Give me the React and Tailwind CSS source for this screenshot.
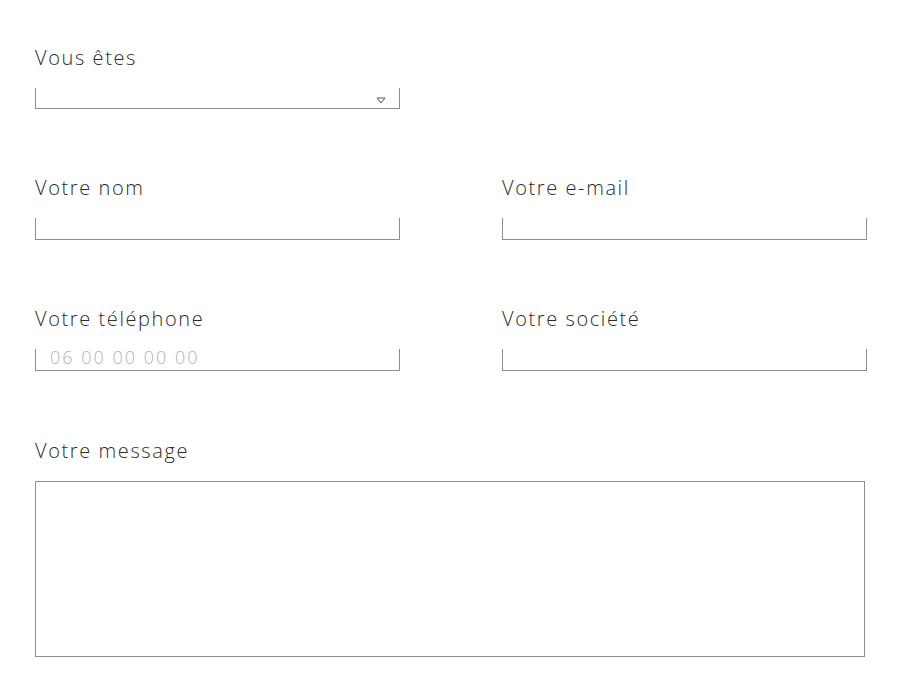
import React from "react";

const font = { fontFamily: '"Open Sans", "Liberation Sans", sans-serif' };

function Label({ children }) {
  return (
    <label className="block h-6 leading-6 text-[20px] font-light text-[#2b2b2b] tracking-[1.6px] mb-[18px]">
      {children}
    </label>
  );
}

function Field({ label, placeholder }) {
  return (
    <div className="w-[365px]">
      <Label>{label}</Label>
      <input
        type="text"
        placeholder={placeholder}
        className="block w-full h-[22px] border-x border-b border-[#8e8e8e] bg-transparent pl-[14px] pb-[5px] text-[18px] font-light tracking-[2px] text-[#555] placeholder:text-[#b3b3b3] outline-none"
      />
    </div>
  );
}

export default function App() {
  return (
    <div className="min-h-[686px] bg-white" style={font}>
      <form className="pl-[35px] pt-[46px] flex flex-col gap-[67px]">
        {/* Vous êtes */}
        <div className="w-[365px]">
          <Label>Vous êtes</Label>
          <div className="relative h-[21px] border-x border-b border-[#8e8e8e]">
            <svg
              className="absolute right-[13px] top-[9px]"
              width="10"
              height="7"
              viewBox="0 0 10 7"
              fill="none"
            >
              <path d="M1 1 H9 L5 6 Z" stroke="#555" strokeWidth="1" />
            </svg>
          </div>
        </div>

        <div className="flex gap-[102px]">
          <Field label="Votre nom" />
          <Field label="Votre e-mail" />
        </div>

        <div className="flex gap-[102px]">
          <Field label="Votre téléphone" placeholder="06 00 00 00 00" />
          <Field label="Votre société" />
        </div>

        <div className="w-[830px] mt-px">
          <Label>Votre message</Label>
          <textarea className="block w-full h-[176px] border border-[#8e8e8e] resize-none outline-none p-2 text-[16px]" />
        </div>
      </form>
    </div>
  );
}
